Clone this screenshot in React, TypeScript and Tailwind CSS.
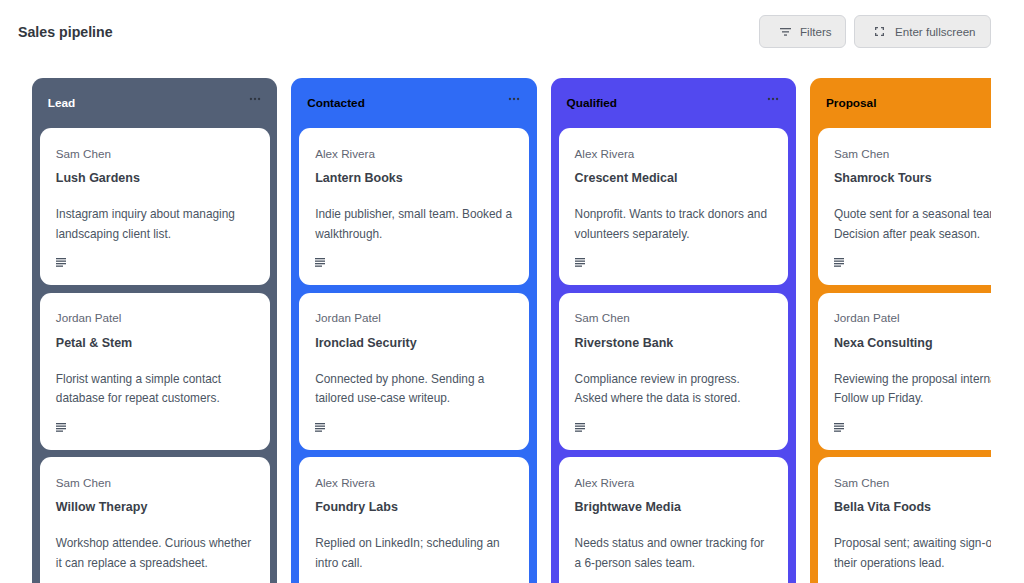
import { Ellipsis } from 'lucide-react';

type Lead = { owner: string; name: string; note: string[] };

const columns: { title: string; bg: string; text: string; leads: Lead[] }[] = [
  {
    title: 'Lead',
    bg: 'bg-[#536076]',
    text: 'text-white',
    leads: [
      { owner: 'Sam Chen', name: 'Lush Gardens', note: ['Instagram inquiry about managing', 'landscaping client list.'] },
      { owner: 'Jordan Patel', name: 'Petal & Stem', note: ['Florist wanting a simple contact', 'database for repeat customers.'] },
      { owner: 'Sam Chen', name: 'Willow Therapy', note: ['Workshop attendee. Curious whether', 'it can replace a spreadsheet.'] },
    ],
  },
  {
    title: 'Contacted',
    bg: 'bg-[#2f6bf5]',
    text: 'text-black',
    leads: [
      { owner: 'Alex Rivera', name: 'Lantern Books', note: ['Indie publisher, small team. Booked a', 'walkthrough.'] },
      { owner: 'Jordan Patel', name: 'Ironclad Security', note: ['Connected by phone. Sending a', 'tailored use-case writeup.'] },
      { owner: 'Alex Rivera', name: 'Foundry Labs', note: ['Replied on LinkedIn; scheduling an', 'intro call.'] },
    ],
  },
  {
    title: 'Qualified',
    bg: 'bg-[#5249ef]',
    text: 'text-black',
    leads: [
      { owner: 'Alex Rivera', name: 'Crescent Medical', note: ['Nonprofit. Wants to track donors and', 'volunteers separately.'] },
      { owner: 'Sam Chen', name: 'Riverstone Bank', note: ['Compliance review in progress.', 'Asked where the data is stored.'] },
      { owner: 'Alex Rivera', name: 'Brightwave Media', note: ['Needs status and owner tracking for', 'a 6-person sales team.'] },
    ],
  },
  {
    title: 'Proposal',
    bg: 'bg-[#f08c10]',
    text: 'text-black',
    leads: [
      { owner: 'Sam Chen', name: 'Shamrock Tours', note: ['Quote sent for a seasonal team.', 'Decision after peak season.'] },
      { owner: 'Jordan Patel', name: 'Nexa Consulting', note: ['Reviewing the proposal internally.', 'Follow up Friday.'] },
      { owner: 'Sam Chen', name: 'Bella Vita Foods', note: ['Proposal sent; awaiting sign-off from', 'their operations lead.'] },
    ],
  },
];

function NotesIcon() {
  return (
    <svg viewBox="0 0 10 9" className="h-[9px] w-[10px] text-[#4b5563]" fill="currentColor">
      <rect x="0" y="0" width="10" height="1.3" />
      <rect x="0" y="2.5" width="10" height="1.3" />
      <rect x="0" y="5" width="10" height="1.3" />
      <rect x="0" y="7.5" width="7" height="1.3" />
    </svg>
  );
}

function FilterIcon() {
  return (
    <svg viewBox="0 0 11 8" className="h-[8px] w-[11px]" fill="currentColor">
      <rect x="0" y="0" width="11" height="1.3" />
      <rect x="2" y="3.2" width="7" height="1.3" />
      <rect x="4" y="6.4" width="3" height="1.3" />
    </svg>
  );
}

function FullscreenIcon() {
  return (
    <svg viewBox="0 0 9 9" className="h-[9px] w-[9px]" fill="none" stroke="currentColor" strokeWidth="1.3">
      <path d="M.65 3V.65H3M6 .65h2.35V3M8.35 6v2.35H6M3 8.35H.65V6" />
    </svg>
  );
}

function LeadCard({ lead }: { lead: Lead }) {
  return (
    <div className="h-[157px] shrink-0 rounded-[11px] bg-white px-4 pt-[16.5px]">
      <p className="text-[11.7px] leading-[18px] text-[#5f6673]">{lead.owner}</p>
      <h3 className="mt-[6.5px] text-[12.5px] leading-[18px] font-semibold text-[#3a3f4a]">{lead.name}</h3>
      <p className="mt-[18px] text-[11.85px] leading-[19.5px] whitespace-nowrap text-[#4b5563]">
        {lead.note[0]}
        <br />
        {lead.note[1]}
      </p>
      <div className="mt-[14px]">
        <NotesIcon />
      </div>
    </div>
  );
}

export default function App() {
  return (
    <div className="h-[583px] overflow-hidden bg-white font-['Liberation_Sans',sans-serif]">
      <header className="flex h-[78px] items-start justify-between pt-[15px] pr-[33px] pl-[18px]">
        <h1 className="mt-[8px] text-[14.2px] leading-[18px] font-semibold text-[#33383f]">Sales pipeline</h1>
        <div className="flex gap-2">
          <button className="flex h-[33px] w-[87px] items-center gap-[9px] rounded-[6px] border border-[#d4d6da] bg-[#ececec] pl-5 text-[11.6px] text-[#565c66]">
            <FilterIcon />
            Filters
          </button>
          <button className="flex h-[33px] w-[137px] items-center gap-[11px] rounded-[6px] border border-[#d4d6da] bg-[#ececec] pl-5 text-[11.6px] text-[#565c66]">
            <FullscreenIcon />
            Enter fullscreen
          </button>
        </div>
      </header>
      <div className="mr-[33px] ml-[32px] flex gap-[14px] overflow-hidden">
        {columns.map((col) => (
          <section key={col.title} className={`h-[560px] w-[245.4px] shrink-0 rounded-t-[11px] px-[7.8px] ${col.bg}`}>
            <div className={`flex h-[50px] items-start justify-between pr-[8px] pl-2 ${col.text}`}>
              <h2 className="mt-[16px] text-[11.8px] leading-[18px] font-semibold">{col.title}</h2>
              {col.title !== 'Proposal' && <Ellipsis className="mt-[14px] h-[14px] w-[14px] text-[#2f3540]" />}
            </div>
            <div className="flex flex-col gap-[7.5px]">
              {col.leads.map((lead) => (
                <LeadCard key={lead.name} lead={lead} />
              ))}
            </div>
          </section>
        ))}
      </div>
    </div>
  );
}
